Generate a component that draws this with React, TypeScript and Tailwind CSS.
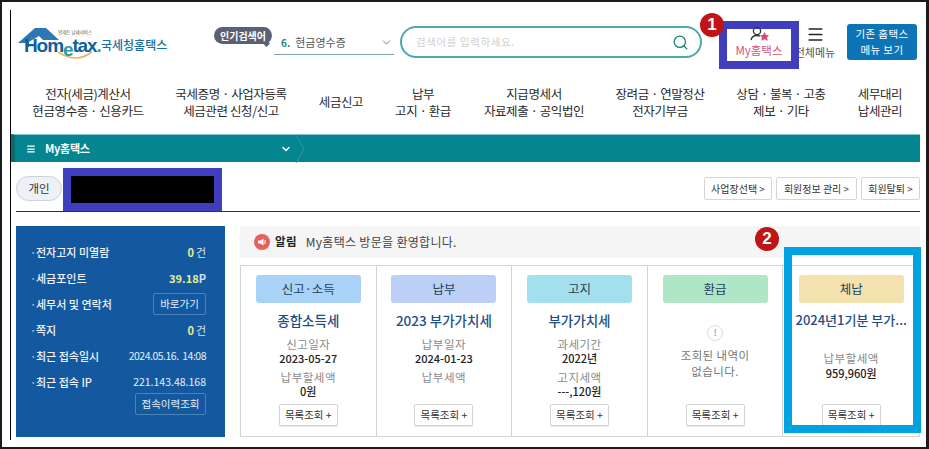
import React from "react";
import { Search, ChevronDown, Menu } from "lucide-react";

const nav: [string, string | null, string][] = [
  ["전자(세금)계산서", "현금영수증 · 신용카드", "w-[154px]"],
  ["국세증명 · 사업자등록", "세금관련 신청/신고", "w-[132px]"],
  ["세금신고", null, "w-[88px]"],
  ["납부", "고지 · 환급", "w-[76px]"],
  ["지급명세서", "자료제출 · 공익법인", "w-[146px]"],
  ["장려금 · 연말정산", "전자기부금", "w-[106px]"],
  ["상담 · 불복 · 고충", "제보 · 기타", "w-[136px]"],
  ["세무대리", "납세관리", "w-[62px]"],
];

function Row({ label, children }: { label: string; children: React.ReactNode }) {
  return (
    <div className="flex h-[26px] items-center justify-between">
      <div className="flex items-center text-[11px] font-medium text-[#eef3f9]">
        <span className="w-[6px] text-[#9fc0e0]">·</span>
        {label}
      </div>
      {children}
    </div>
  );
}

function ListBtn() {
  return (
    <button className="mt-auto mb-[10px] flex h-[22px] w-[59px] shrink-0 items-center justify-center rounded-[2px] border border-[#d5d5d5] bg-white text-[10.5px] text-[#333] shadow-[0_1px_1px_#e5e5e5]">
      목록조회 +
    </button>
  );
}

function Card({
  chip,
  chipClass,
  title,
  rows,
}: {
  chip: string;
  chipClass: string;
  title: string;
  rows: [string, string][];
}) {
  return (
    <div className="flex min-w-0 flex-col items-center border-r border-[#d4d4d4] pt-[9px]">
      <div className={`flex h-[28px] w-[105px] items-center justify-center rounded-[3px] text-[12.5px] text-[#23405a] ${chipClass}`}>
        {chip}
      </div>
      <div className="mt-[7px] h-[20px] whitespace-nowrap text-[13.5px] leading-[20px] font-medium text-[#1f4d87]">{title}</div>
      <div className="mt-[7px] flex flex-col items-center">
        {rows.map(([a, b], i) => (
          <div key={a} className={`flex flex-col items-center ${i ? "mt-[5px]" : ""}`}>
            <div className="h-[14px] text-[11.5px] leading-[14px] tracking-[0.5px] text-[#8a8a8a]">{a}</div>
            <div className="h-[14px] text-[11px] leading-[14px] font-medium text-[#222]">{b}</div>
          </div>
        ))}
      </div>
      <ListBtn />
    </div>
  );
}

export default function App() {
  return (
    <div className="relative h-[449px] w-[929px] overflow-hidden border-t-2 border-r-[3px] border-b-2 border-l-2 border-[#1c1c1c] bg-white font-['Noto_Sans_CJK_KR','Noto_Sans',sans-serif]">
      <div className="mt-[8px] ml-[8px] flex h-[430px] w-[910px] flex-col border-l border-black">
        {/* top header */}
        <div className="flex h-[64px] shrink-0 items-start">
          <div className="relative mt-[16px] ml-[7px] h-[36px] w-[196px] shrink-0">
            <svg className="absolute top-0 left-0" width="60" height="36" viewBox="0 0 60 36">
              <path d="M0 17 L17 2 H28 L41 14 H25 L21 10 L9 17 Z" fill="#2f76b5" />
              <path d="M9 16 V21 H11 V16 Z" fill="#1a6aa8" />
            </svg>
            <svg className="absolute top-[24px] left-[38px]" width="40" height="12" viewBox="0 0 40 12">
              <path d="M2 2 Q20 14 36 2" fill="none" stroke="#e8b765" strokeWidth="1.6" />
            </svg>
            <div className="absolute top-[3px] left-[40px] whitespace-nowrap text-[4.5px] leading-[6px] text-[#555]">언제든 납세서비스</div>
            <div className="absolute top-[8px] left-[6px] flex items-baseline whitespace-nowrap font-['Liberation_Sans',sans-serif] text-[19px] leading-[24px] font-bold tracking-[-1.1px] text-[#0f5f9e]">
              <span>Hom</span>
              <span className="relative top-[4px] text-[#2a9aa8]">e</span>
              <span>tax</span>
              <span className="text-[#2aa8a0]">.</span>
            </div>
            <div className="absolute top-[11px] left-[83px] whitespace-nowrap text-[12px] leading-[16px] font-medium text-[#1a6f9f]">국세청홈택스</div>
          </div>

          <div className="relative mt-[17px] flex h-[17px] w-[58px] shrink-0 items-center justify-center rounded-full bg-[#5b6075] text-[10px] font-bold text-white">
            인기검색어
            <span className="absolute right-[3px] -bottom-[2px] size-[5px] rotate-45 bg-[#5b6075]" />
          </div>
          <div className="mt-[21px] ml-[2px] flex h-[24px] w-[120px] shrink-0 items-center border-b border-[#7aa7ad] pl-[7px] text-[11px] text-[#555]">
            <span className="mr-[5px] text-[10px] font-bold text-[#1f8a7c]">6.</span>
            현금영수증
            <ChevronDown className="mr-[1px] ml-auto size-[13px] text-[#667]" strokeWidth={1.6} />
          </div>

          <div className="mt-[16px] ml-[6px] flex h-[32px] w-[302px] shrink-0 items-center rounded-full border-2 border-[#4da9ad] pr-[11px] pl-[14px] text-[10.5px] tracking-[0.6px] text-[#cfcfcf]">
            검색어를 입력하세요.
            <Search className="ml-auto size-[17px] text-[#1f7f78]" strokeWidth={1.8} />
          </div>

          <div className="relative z-10 mt-[11px] ml-[17px] flex h-[48px] w-[80px] shrink-0 flex-col items-center border-8 border-[#3f3fbd] bg-white">
            <svg width="22" height="16" viewBox="0 0 22 16" className="mt-[-3px] ml-[2px]">
              <circle cx="8" cy="5" r="3.6" fill="none" stroke="#333" strokeWidth="1.3" />
              <path d="M2 14 Q3 9.5 8 9.5 Q10 9.5 11 10.2" fill="none" stroke="#333" strokeWidth="1.3" />
              <path d="M15.5 6 L17 9 L20 9.3 L18 11.6 L18.8 14.8 L15.5 13.2 L12.2 14.8 L13 11.6 L11 9.3 L14 9 Z" fill="#d9487a" />
            </svg>
            <div className="mt-[1px] text-[11.5px] leading-[14px] whitespace-nowrap text-[#d8507a]">My홈택스</div>
          </div>
          <div className="mt-[15px] ml-[-6px] flex w-[44px] shrink-0 flex-col items-center">
            <Menu className="size-[19px] text-[#222]" strokeWidth={1.8} />
            <div className="mt-[1px] text-[11px] leading-[14px] whitespace-nowrap text-[#555]">전체메뉴</div>
          </div>
          <div className="mt-[14px] ml-[10px] flex h-[36px] w-[70px] shrink-0 flex-col items-center justify-center rounded-[3px] bg-[#0e74b8] text-[10.5px] leading-[16px] tracking-[0.4px] text-white">
            <span>기존 홈택스</span>
            <span>메뉴 보기</span>
          </div>
        </div>

        {/* main nav */}
        <div className="flex h-[60px] shrink-0 items-center pb-[5px]">
          {nav.map(([a, b, w]) => (
            <div key={a} className={`${w} flex shrink-0 flex-col items-center text-[12.5px] leading-[17px] tracking-[-0.4px] whitespace-nowrap text-[#2a2a2a]`}>
              <span>{a}</span>
              {b && <span>{b}</span>}
            </div>
          ))}
        </div>

        {/* teal bar */}
        <div className="flex h-[28px] shrink-0 items-center border-t border-[#7cc4c8] border-l-[4px] border-l-[#0a6a70] bg-[#04858f] text-white">
          <Menu className="ml-[11px] size-[10px]" strokeWidth={3} />
          <span className="ml-[9px] w-[235px] text-[11px] font-bold tracking-[-0.3px]">My홈택스</span>
          <ChevronDown className="size-[12px]" strokeWidth={3} />
          <svg width="10" height="28" viewBox="0 0 10 28" className="ml-[3px]">
            <path d="M1 0 L9 14 L1 28" fill="none" stroke="#2a9ba4" strokeWidth="1" />
          </svg>
        </div>

        {/* user row */}
        <div className="ml-[5px] flex h-[50px] shrink-0 items-start border-b border-[#333]">
          <div className="mt-[14px] flex h-[25px] w-[46px] items-center justify-center rounded-full border border-[#c9d2de] bg-[#eef2f7] text-[11.5px] text-[#333]">
            개인
          </div>
          <div className="mt-[6px] ml-[1px] h-[43px] w-[159px] border-8 border-[#3f3fbd] bg-black" />
          <div className="mt-[15px] ml-auto flex gap-[4px]">
            {[
              ["사업장선택 >", "w-[68px]"],
              ["회원정보 관리 >", "w-[81px]"],
              ["회원탈퇴 >", "w-[59px]"],
            ].map(([t, w]) => (
              <div key={t} className={`${w} flex h-[23px] items-center justify-center rounded-[2px] border border-[#d5d5d5] text-[10px] whitespace-nowrap text-[#333]`}>
                {t}
              </div>
            ))}
          </div>
        </div>

        {/* content */}
        <div className="mt-[14px] ml-[5px] flex">
          <div className="flex h-[211px] w-[209px] shrink-0 flex-col bg-[#14599f] pt-[13px] pr-[19px] pl-[14px]">
            <Row label="전자고지 미열람">
              <span className="text-[11px] font-bold text-[#e3ef8a]">0<span className="ml-[2px] font-normal text-[#d5e2ee]">건</span></span>
            </Row>
            <Row label="세금포인트">
              <span className="text-[11px] font-bold text-[#e3ef8a]">39.18<span className="text-[#d5e2ee]">P</span></span>
            </Row>
            <Row label="세무서 및 연락처">
              <div className="flex h-[22px] w-[53px] items-center justify-center rounded-[2px] border border-[#4d82b8] text-[10.5px] text-[#e6eef6]">바로가기</div>
            </Row>
            <Row label="쪽지">
              <span className="text-[11px] font-bold text-[#e3ef8a]">0<span className="ml-[2px] font-normal text-[#d5e2ee]">건</span></span>
            </Row>
            <Row label="최근 접속일시">
              <span className="text-[10.5px] tracking-[-0.5px] text-[#e6eef6]">2024.05.16.&nbsp; 14:08</span>
            </Row>
            <Row label="최근 접속 IP">
              <span className="text-[10.5px] text-[#e6eef6]">221.143.48.168</span>
            </Row>
            <div className="mt-[-2px] flex h-[22px] w-[71px] items-center justify-center self-end rounded-[2px] border border-[#4d82b8] text-[10.5px] text-[#e6eef6]">접속이력조회</div>
          </div>

          <div className="ml-[15px] flex w-[680px] shrink-0 flex-col">
            <div className="flex h-[32px] items-center bg-[#f5f5f5] pl-[14px] text-[12px] tracking-[0.3px] text-[#444]">
              <svg width="16" height="16" viewBox="0 0 16 16">
                <circle cx="8" cy="8" r="8" fill="#e8605c" />
                <path d="M4 6.5 H6.5 L9.5 4.5 V11.5 L6.5 9.5 H4 Z" fill="#fff" />
                <path d="M11 6 V10" stroke="#fff" strokeWidth="1" />
              </svg>
              <span className="ml-[5px] text-[11.5px] font-bold text-[#222]">알림</span>
              <span className="ml-[9px]">My홈택스 방문을 환영합니다.</span>
            </div>
            <div className="mt-[7px] grid h-[172px] grid-cols-5 border border-[#d4d4d4]">
              <Card chip="신고·소득" chipClass="bg-[#a9d2f7]" title="종합소득세" rows={[["신고일자", "2023-05-27"], ["납부할세액", "0원"]]} />
              <Card chip="납부" chipClass="bg-[#bcd0f7]" title="2023 부가가치세" rows={[["납부일자", "2024-01-23"], ["납부세액", " "]]} />
              <Card chip="고지" chipClass="bg-[#a3e0ee]" title="부가가치세" rows={[["과세기간", "2022년"], ["고지세액", "---,120원"]]} />
              <div className="flex flex-col items-center border-r border-[#d4d4d4] pt-[9px]">
                <div className="flex h-[28px] w-[105px] items-center justify-center rounded-[3px] bg-[#aee6c6] text-[12.5px] text-[#23405a]">환급</div>
                <div className="mt-[22px] flex size-[16px] items-center justify-center rounded-full border border-[#ddd] text-[9px] text-[#777]">!</div>
                <div className="mt-[6px] text-center text-[11.5px] leading-[16px] tracking-[0.4px] text-[#777]">
                  조회된 내역이
                  <br />
                  없습니다.
                </div>
                <ListBtn />
              </div>
              <div className="flex min-w-0 flex-col items-center pt-[9px]">
                <div className="flex h-[28px] w-[105px] items-center justify-center rounded-[3px] bg-[#f3e2ae] text-[12.5px] text-[#23405a]">체납</div>
                <div className="mt-[7px] h-[20px] whitespace-nowrap text-[13px] leading-[20px] font-medium text-[#1f4d87]">2024년1기분 부가...</div>
                <div className="mt-[21px] h-[14px] text-[11.5px] leading-[14px] tracking-[0.5px] text-[#8a8a8a]">납부할세액</div>
                <div className="mt-[1px] h-[14px] text-[11px] leading-[14px] font-medium text-[#222]">959,960원</div>
                <ListBtn />
              </div>
            </div>
          </div>
        </div>
      </div>

      {/* annotations */}
      <div className="absolute top-[245px] left-[782px] h-[186px] w-[137px] border-8 border-[#00a3e0]" />
      <div className="absolute top-[11px] left-[698px] z-20 flex size-[24px] items-center justify-center rounded-full bg-[#c21414] font-['Liberation_Sans',sans-serif] text-[17px] font-bold text-white">1</div>
      <div className="absolute top-[225px] left-[753px] z-20 flex size-[24px] items-center justify-center rounded-full bg-[#c21414] font-['Liberation_Sans',sans-serif] text-[17px] font-bold text-white">2</div>
    </div>
  );
}
